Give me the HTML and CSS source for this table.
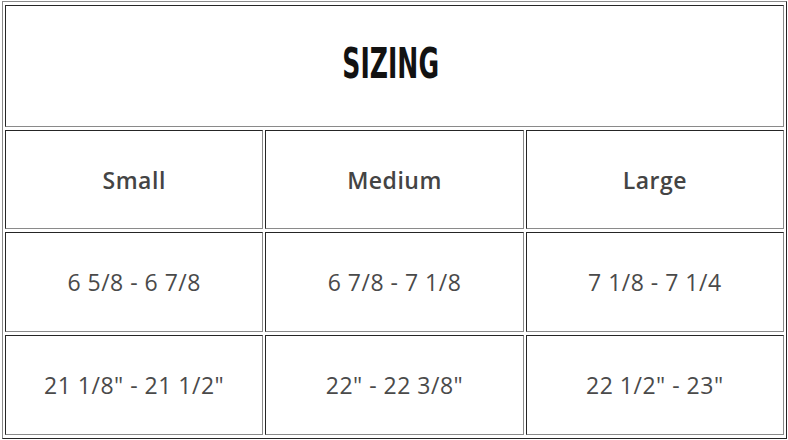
FILE: index.html
```html
<!DOCTYPE html>
<html lang="en">
<head>
<meta charset="utf-8">
<title>Sizing</title>
<link rel="stylesheet" href="styles.css">
</head>
<body>
<table class="sizing">
  <tr class="title-row">
    <th colspan="3" class="title-cell"><span class="title">SIZING</span></th>
  </tr>
  <tr class="head-row">
    <th class="head-cell">Small</th>
    <th class="head-cell">Medium</th>
    <th class="head-cell">Large</th>
  </tr>
  <tr class="data-row">
    <td class="data-cell">6 5/8 - 6 7/8</td>
    <td class="data-cell">6 7/8 - 7 1/8</td>
    <td class="data-cell">7 1/8 - 7 1/4</td>
  </tr>
  <tr class="data-row">
    <td class="data-cell">21 1/8" - 21 1/2"</td>
    <td class="data-cell">22" - 22 3/8"</td>
    <td class="data-cell">22 1/2" - 23"</td>
  </tr>
</table>
</body>
</html>
```
FILE: styles.css
```css
html, body {
  margin: 0;
  padding: 0;
  background: #ffffff;
}

.sizing {
  margin: 1px 0 0 2px;
  width: 785px;
  border-collapse: separate;
  border-spacing: 2px 3px;
  border-style: solid;
  border-width: 1px;
  border-color: #8a8a8a #252525 #252525 #8a8a8a;
  table-layout: fixed;
}

.sizing th,
.sizing td {
  border-style: solid;
  border-width: 1px;
  border-color: #252525 #8a8a8a #8a8a8a #252525;
  padding: 0;
  text-align: center;
  vertical-align: middle;
}

.title-cell {
  height: 120px;
}

.title {
  display: inline-block;
  font-family: "DejaVu Sans Condensed", "Liberation Sans", sans-serif;
  font-weight: 700;
  font-size: 42px;
  line-height: 1;
  color: #121212;
  transform: scaleX(0.665);
  letter-spacing: 0;
  position: relative;
  top: -2px;
  left: -4px;
}

.head-cell {
  height: 97px;
  padding-bottom: 8px;
  font-family: "Open Sans", "Noto Sans", sans-serif;
  font-weight: 600;
  font-size: 23px;
  color: #444444;
  letter-spacing: 0.5px;
}

.data-cell {
  height: 98px;
  font-family: "Open Sans", "Noto Sans", sans-serif;
  font-weight: 400;
  font-size: 23px;
  color: #4a4a4a;
  letter-spacing: 0.5px;
}
```
